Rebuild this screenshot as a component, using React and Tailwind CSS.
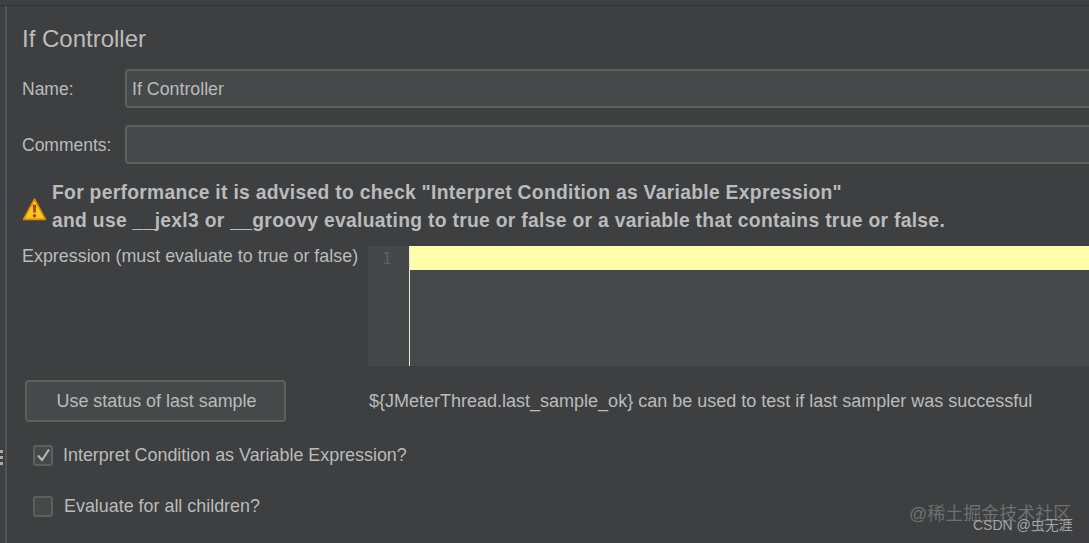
export default function App() {
  const font = { fontFamily: '"Liberation Sans", Arial, sans-serif' };
  return (
    <div style={font} className="relative w-[1089px] h-[543px] overflow-hidden bg-[#3d3f41] text-[#bbbbbb] flex flex-col">
      <div className="h-[6px] shrink-0 border-b border-b-[#323232]" />
      <div className="relative flex-1 ml-[5px] border-l-2 border-l-[#515354] pl-[15px] flex flex-col">
        <div className="mt-[17px] text-[24px] leading-[32px] h-[32px]">If Controller</div>
        <div className="mt-[14px] flex items-center h-[39px]">
          <div className="w-[103px] text-[17.5px] pt-[1px]">Name:</div>
          <div className="flex-1 h-[39px] -mr-[8px] rounded-[4px] border-2 border-[#5e6060] bg-[#45494a] pl-[5px] pt-[1px] flex items-center text-[17.8px]">If Controller</div>
        </div>
        <div className="mt-[17px] flex items-center h-[39px]">
          <div className="w-[103px] text-[17.5px] pt-[1px]">Comments:</div>
          <div className="flex-1 h-[39px] -mr-[8px] rounded-[4px] border-2 border-[#5e6060] bg-[#45494a]" />
        </div>
        <div className="mt-[15px] flex items-center h-[56px]">
          <svg width="23" height="23" viewBox="0 0 22 22" className="ml-[1px] mt-[4px] shrink-0">
            <path d="M11 1 L21.5 20.5 H0.5 Z" fill="#fbc81e" stroke="#e08c00" strokeWidth="1.6" strokeLinejoin="round" />
            <path d="M9.3 6.5h3.4l-.6 7.5h-2.2z" fill="#a8400f" />
            <circle cx="11" cy="17" r="1.7" fill="#a8400f" />
          </svg>
          <div className="ml-[6px] text-[19.3px] font-bold leading-[28px] whitespace-nowrap tracking-[0.3px]">
            <div>For performance it is advised to check "Interpret Condition as Variable Expression"</div>
            <div>and use __jexl3 or __groovy evaluating to true or false or a variable that contains true or false.</div>
          </div>
        </div>
        <div className="mt-[11px] flex h-[120px]">
          <div className="w-[346px] shrink-0 text-[17.9px] leading-[20px] whitespace-nowrap">Expression (must evaluate to true or false)</div>
          <div className="w-[41px] bg-[#454748] shrink-0 text-[#5f6163] text-[16px] pl-[14px] pt-[1px]" style={{ fontFamily: '"DejaVu Sans Mono", monospace' }}>1</div>
          <div className="w-[1px] bg-[#e8e8e8] shrink-0" />
          <div className="flex-1 -mr-[8px] bg-[#45494a]">
            <div className="h-[24px] bg-[#ffffa8]" />
          </div>
        </div>
        <div className="mt-[14px] flex items-center h-[42px]">
          <button className="ml-[3px] w-[261px] h-[42px] pl-[2px] rounded-[4px] border-2 border-[#5e6060] bg-[#45494a] text-[#bbbbbb] text-[17.9px]">Use status of last sample</button>
          <div className="ml-[83px] text-[18px] whitespace-nowrap">{"${JMeterThread.last_sample_ok} can be used to test if last sampler was successful"}</div>
        </div>
        <div className="mt-[21px] flex items-center h-[24px]">
          <div className="ml-[11px] w-[20px] h-[21px] rounded-[3px] border-2 border-[#5e6060] bg-[#45494a] flex items-center justify-center">
            <svg width="15" height="14" viewBox="0 0 15 14" fill="none">
              <path d="M2 7.5 L6 12 L13 1.5" stroke="#b8b8b8" strokeWidth="2" />
            </svg>
          </div>
          <div className="ml-[10px] text-[17.9px] whitespace-nowrap">Interpret Condition as Variable Expression?</div>
        </div>
        <div className="mt-[27px] flex items-center h-[24px]">
          <div className="ml-[11px] w-[20px] h-[21px] rounded-[3px] border-2 border-[#5e6060] bg-[#45494a]" />
          <div className="ml-[11px] text-[17.9px] whitespace-nowrap">Evaluate for all children?</div>
        </div>
        <div className="absolute -left-[7px] top-[444px] flex flex-col gap-[3px]">
          <div className="w-[3px] h-[3px] bg-[#a9a9a9]" />
          <div className="w-[3px] h-[3px] bg-[#a9a9a9]" />
          <div className="w-[3px] h-[3px] bg-[#a9a9a9]" />
        </div>
      </div>
      <div className="absolute left-[909px] top-[502px] text-[18px] leading-[24px] text-[#6d6f70] whitespace-nowrap" style={{ fontFamily: '"Liberation Sans", "Noto Sans CJK SC", sans-serif' }}>@稀土掘金技术社区</div>
      <div className="absolute left-[973px] top-[515px] text-[14px] leading-[20px] text-[#a3a5a6] whitespace-nowrap" style={{ fontFamily: '"Liberation Sans", "Noto Sans CJK SC", sans-serif' }}>CSDN @虫无涯</div>
    </div>
  );
}
